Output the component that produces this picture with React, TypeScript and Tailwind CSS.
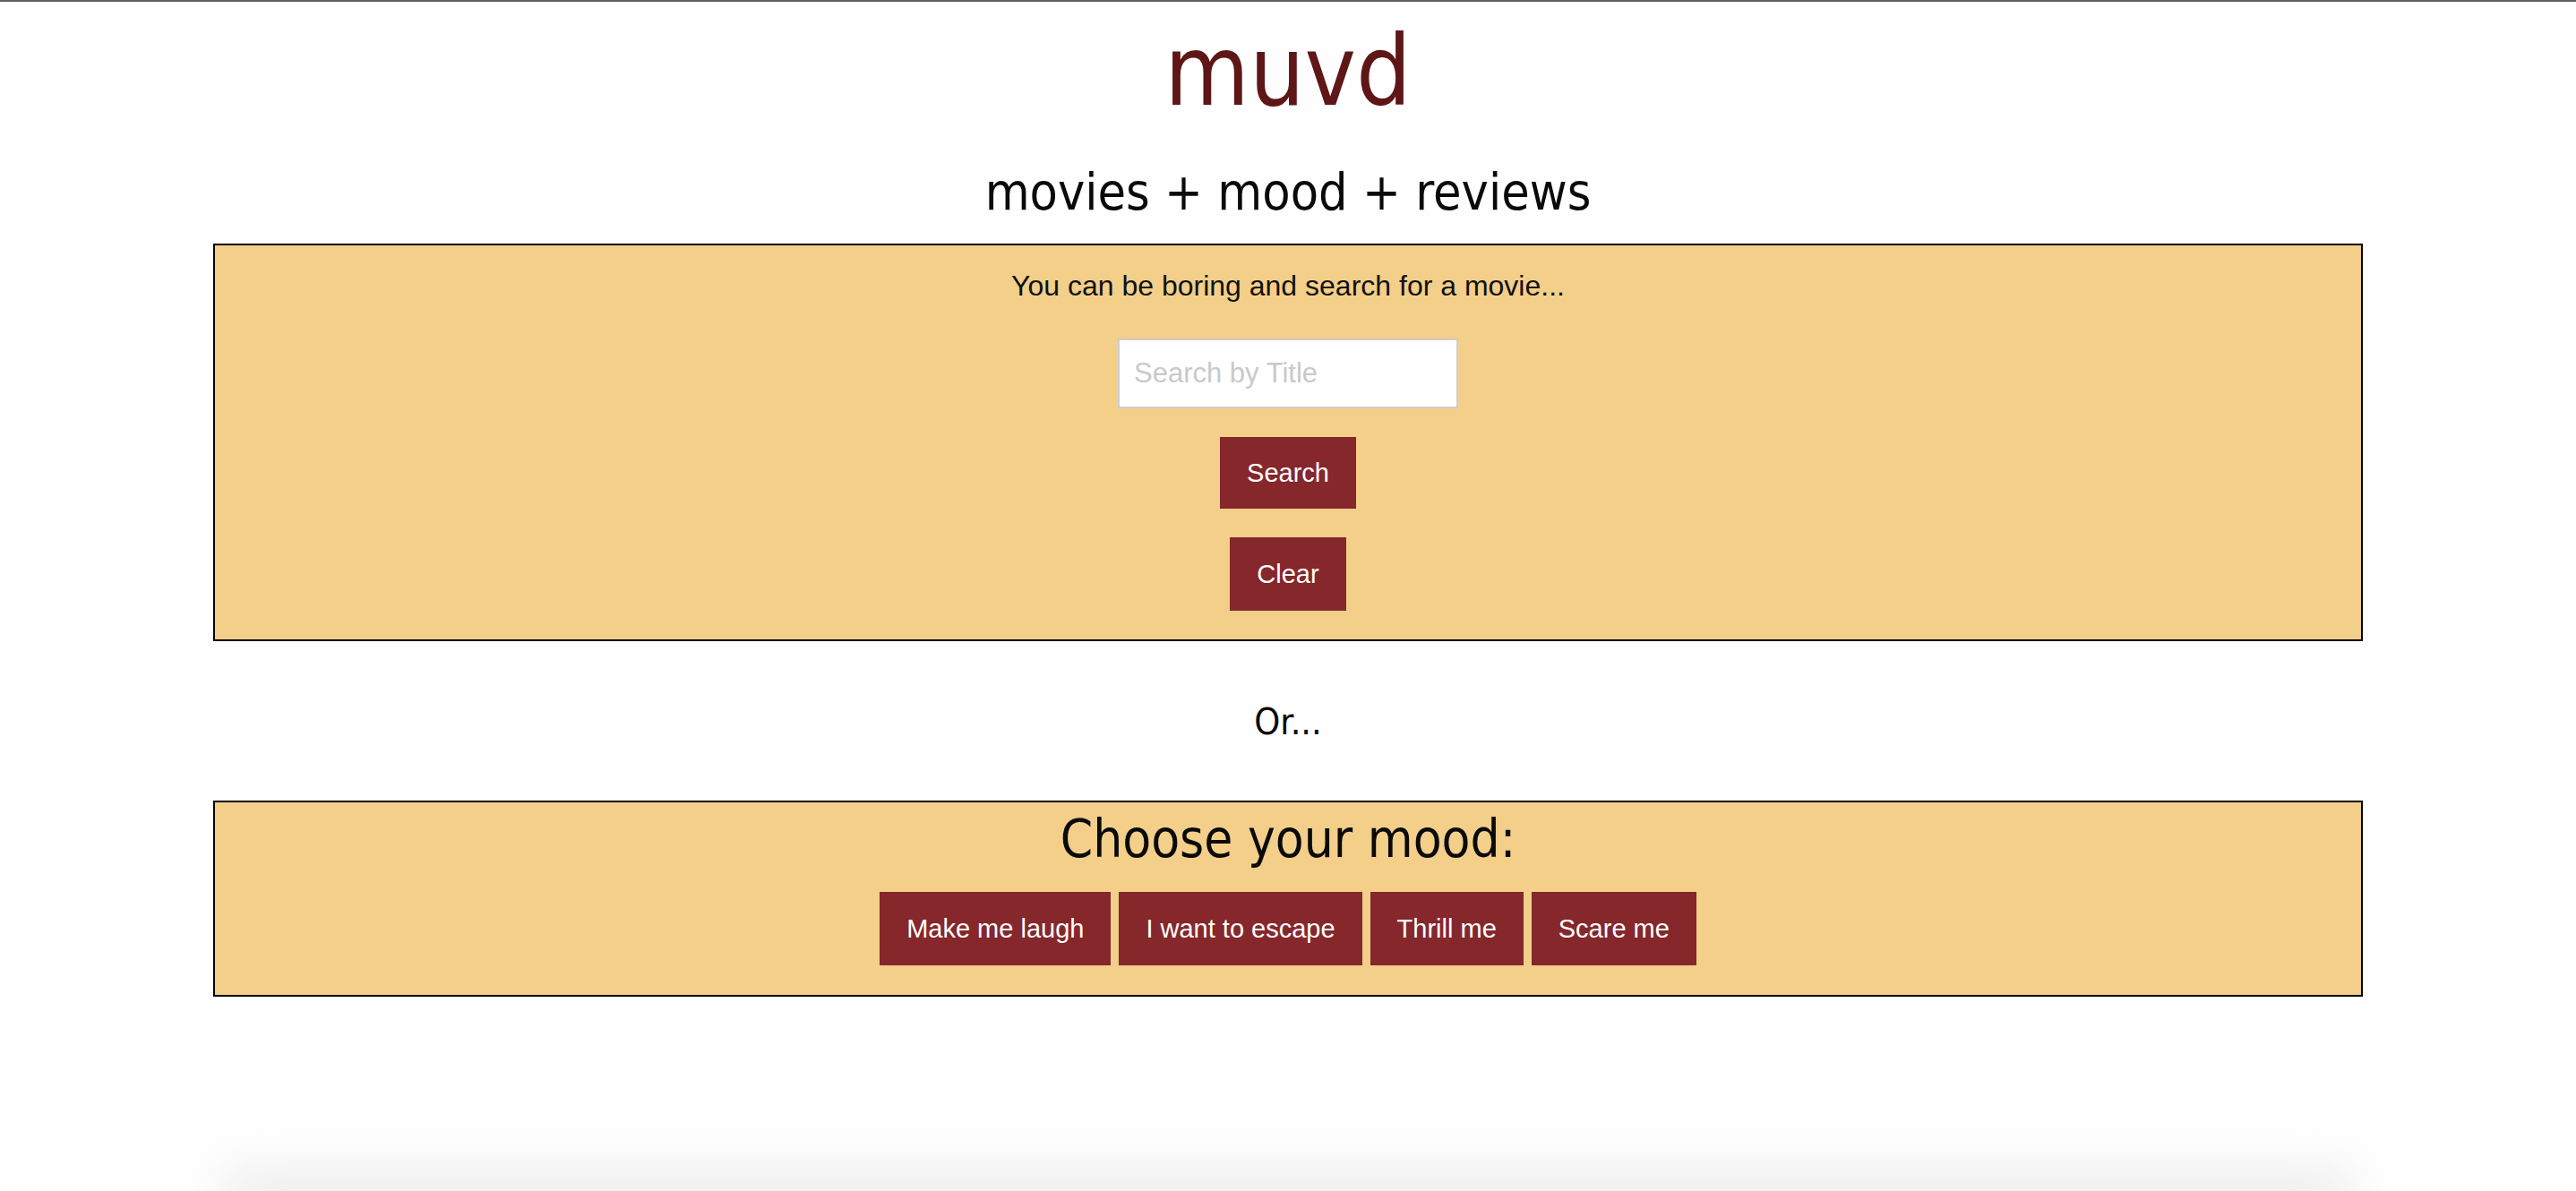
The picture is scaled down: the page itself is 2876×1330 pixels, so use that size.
import React from "react";

const humanist = { fontFamily: '"DejaVu Sans Condensed", "DejaVu Sans", "Open Sans", sans-serif', fontStretch: "semi-condensed" } as React.CSSProperties;

function RedButton({ label, className = "" }: { label: string; className?: string }) {
  return (
    <button
      type="button"
      className={`bg-[#85272b] text-white text-[29px] leading-[33px] px-[30px] ${className}`}
      style={{ fontFamily: '"Liberation Sans", Arial, sans-serif' }}
    >
      {label}
    </button>
  );
}

export default function App() {
  return (
    <div className="min-h-[1330px] w-full bg-[#fefefe] border-t-2 border-[#5f5f5f] flex flex-col items-center overflow-hidden">
      <h1
        className="mt-[24px] text-[108px] leading-[108px] text-[#5e1616] font-normal"
        style={humanist}
      >
        muvd
      </h1>
      <h2 className="mt-[52px] text-[57px] leading-[57px] text-[#0a0a0a] font-normal" style={humanist}>
        movies + mood + reviews
      </h2>

      <section
        className="mt-[29px] w-[2400px] border-2 border-black bg-[#f3cf8a] flex flex-col items-center"
        style={{ fontFamily: '"Liberation Sans", Arial, sans-serif' }}
      >
        <p className="mt-[27px] text-[32px] leading-[36px] text-[#111]">
          You can be boring and search for a movie...
        </p>
        <input
          type="text"
          placeholder="Search by Title"
          className="mt-[41px] w-[380px] h-[78px] bg-white border-2 border-[#cdcdcd] px-[16px] text-[31px] placeholder:text-[#c9c9c9] outline-none"
        />
        <RedButton label="Search" className="mt-[32px] h-[80px]" />
        <RedButton label="Clear" className="mt-[32px] mb-[32px] h-[82px]" />
      </section>

      <p className="mt-[66px] text-[41px] leading-[48px] text-[#0a0a0a]" style={humanist}>
        Or...
      </p>

      <section className="mt-[64px] w-[2400px] border-2 border-black bg-[#f3cf8a] flex flex-col items-center">
        <h3 className="mt-[11px] text-[58px] leading-[60px] text-[#0a0a0a] font-normal" style={humanist}>
          Choose your mood:
        </h3>
        <div className="mt-[29px] mb-[33px] flex gap-[9px]">
          <RedButton label="Make me laugh" className="h-[82px]" />
          <RedButton label="I want to escape" className="h-[82px]" />
          <RedButton label="Thrill me" className="h-[82px]" />
          <RedButton label="Scare me" className="h-[82px]" />
        </div>
      </section>

      <div className="mt-auto w-[2380px] h-[60px] translate-y-[32px] rounded-[60px] bg-[#efefef] blur-[22px]" />
    </div>
  );
}
